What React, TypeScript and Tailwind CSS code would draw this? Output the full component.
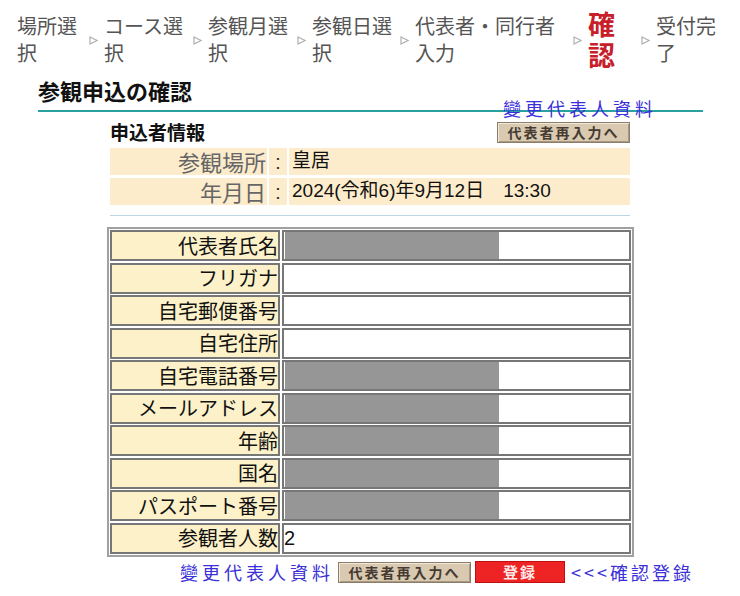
const jp = "font-['Noto_Sans_CJK_JP','Liberation_Sans',sans-serif]"
const tc = "font-['Noto_Sans_CJK_TC','Liberation_Serif',serif]"
const mix = "font-['Liberation_Sans','Noto_Sans_CJK_JP',sans-serif]"

const steps = [
  { label: "場所選択", w: "w-[66px]" },
  { label: "コース選択", w: "w-[83px]" },
  { label: "参観月選択", w: "w-[83px]" },
  { label: "参観日選択", w: "w-[82px]" },
  { label: "代表者・同行者入力", w: "w-[152px]" },
]

function Arrow() {
  return (
    <svg width="9" height="9" viewBox="0 0 9 9" className="mx-[6px] mt-[3px] shrink-0">
      <path d="M1 1 L8 4.5 L1 8 Z" fill="none" stroke="#b0b0b0" strokeWidth="1.2" />
    </svg>
  )
}

function ReenterButton() {
  return (
    <div className="flex h-[21px] w-[133px] items-center justify-center border border-[#8a7d6a] bg-[#d9c9b0] text-[14px] font-bold tracking-[2px] text-[#453b33] shadow-[inset_1px_1px_0_#f2e8d8,inset_-1px_-1px_0_#a89880]">
      <span className={tc}>代表者再入力へ</span>
    </div>
  )
}

const rows: Array<{ label: string; value?: string; redacted?: boolean }> = [
  { label: "代表者氏名", redacted: true },
  { label: "フリガナ" },
  { label: "自宅郵便番号" },
  { label: "自宅住所" },
  { label: "自宅電話番号", redacted: true },
  { label: "メールアドレス", redacted: true },
  { label: "年齢", redacted: true },
  { label: "国名", redacted: true },
  { label: "パスポート番号", redacted: true },
  { label: "参観者人数", value: "2" },
]

export default function App() {
  return (
    <div className={`h-[596px] w-[740px] overflow-hidden bg-white ${jp}`}>
      {/* progress steps */}
      <div className="flex items-center pl-[17px] pt-[8px]">
        {steps.map((s) => (
          <div key={s.label} className="flex items-center">
            <span className={`${s.w} text-[20px] leading-[27px] text-[#555]`}>{s.label}</span>
            <Arrow />
          </div>
        ))}
        <span className="flex w-[47px] flex-col text-[27px] font-bold leading-[31px] text-[#c8202a]">
          <span>確</span>
          <span>認</span>
        </span>
        <Arrow />
        <span className="w-[64px] text-[20px] leading-[27px] text-[#555]">受付完了</span>
      </div>

      {/* heading */}
      <div className="ml-[38px] mt-[6px] w-[665px]">
        <h1 className="text-[22px] font-bold leading-[28px] text-[#111]">参観申込の確認</h1>
        <div className="relative mt-[6px] h-[2px] bg-[#2aa0a0]">
          <span className={`absolute left-[465px] top-[-13px] text-[18px] leading-[22px] tracking-[4px] text-[#3b30d8] ${tc}`}>
            變更代表人資料
          </span>
        </div>
      </div>

      <div className="ml-[110px] w-[520px]">
        <div className="mt-[9px] flex items-end justify-between">
          <span className="text-[19px] font-bold leading-[22px] text-[#111]">申込者情報</span>
          <ReenterButton />
        </div>

        {/* visit info */}
        <div className="mt-[5px] flex flex-col gap-[3px]">
          {[
            ["参観場所", "皇居"],
            ["年月日", "2024(令和6)年9月12日　13:30"],
          ].map(([k, v]) => (
            <div key={k} className="flex h-[27px] gap-[2px]">
              <div className="flex w-[157px] items-center justify-end bg-[#fdeccc] pr-[1px] text-[22px] text-[#666]">{k}</div>
              <div className={`flex w-[18px] items-center justify-center bg-[#fdeccc] text-[21px] text-[#333] ${mix}`}>:</div>
              <div className={`flex flex-1 items-center bg-[#fdeccc] pl-[3px] text-[19px] text-[#111] ${mix}`}>{v}</div>
            </div>
          ))}
        </div>

        <div className="mt-[10px] h-px bg-[#bcd6e2]" />
      </div>

      {/* applicant table */}
      <div className="ml-[107px] mt-[11px] w-[527px] border-2 border-[#a0a0a0] p-[1px]">
        <div className="flex flex-col gap-[1.5px]">
          {rows.map((r) => (
            <div key={r.label} className="flex h-[31px] gap-[2px]">
              <div className="flex w-[170px] items-center justify-end border-2 border-[#777] bg-[#fcf1c9] text-[20px] text-[#111]">
                {r.label}
              </div>
              <div className={`flex flex-1 items-stretch border-2 border-[#777] bg-white text-[20px] text-[#111] ${mix}`}>
                {r.redacted ? (
                  <div className="ml-[1px] w-[214px] bg-[#969696]" />
                ) : (
                  <span className="flex items-center">{r.value}</span>
                )}
              </div>
            </div>
          ))}
        </div>
      </div>

      {/* footer actions */}
      <div className="ml-[180px] mt-[2px] flex items-center gap-[4px]">
        <span className={`text-[18px] tracking-[4px] text-[#3b30d8] ${tc}`}>變更代表人資料</span>
        <ReenterButton />
        <div className="flex h-[22px] w-[90px] items-center justify-center bg-[#ee2424] text-[15px] font-bold tracking-[2px] text-[#fde8e8] shadow-[inset_0_0_0_1px_#c01010]">
          <span className={tc}>登録</span>
        </div>
        <span className={`ml-[2px] text-[18px] tracking-[3px] text-[#3b30d8] ${tc}`}>&lt;&lt;&lt;確認登錄</span>
      </div>
    </div>
  )
}
